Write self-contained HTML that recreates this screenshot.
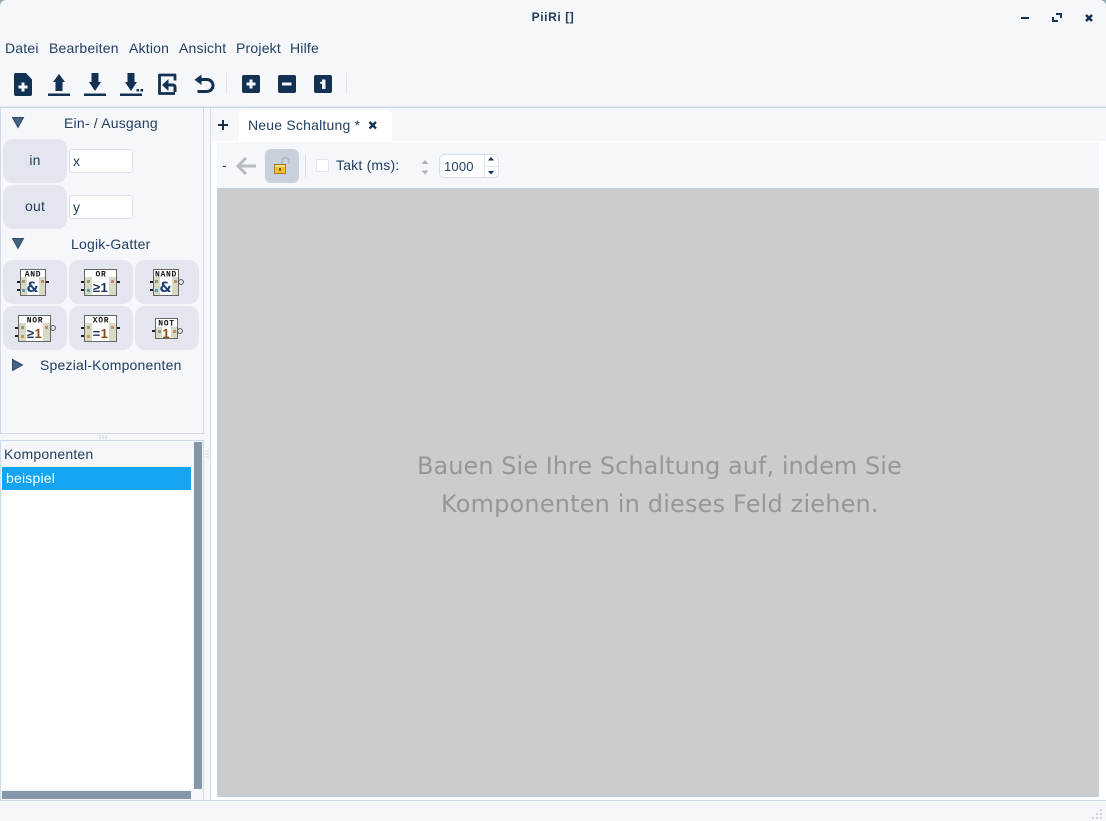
<!DOCTYPE html>
<html><head><meta charset="utf-8"><style>
html,body{margin:0;padding:0;background:#f5f7fb}
body{position:relative;width:1106px;height:821px;overflow:hidden;font-family:"Liberation Sans",sans-serif;font-size:14px;color:#233e61;letter-spacing:.2px}
.a{position:absolute;white-space:nowrap;box-sizing:border-box}
.m{top:41px;line-height:15px}
.b{background:#e3e6ee;border-radius:10px;text-align:center}
.i{background:#fff;border:1px solid #d8e0ee;border-radius:3px;padding-left:3px;font-size:14px;line-height:22px;letter-spacing:0}
</style></head><body>
<div class="a" style="left:0;top:0;width:6px;height:6px;background:#8fa9ad"><div style="width:6px;height:6px;background:#f5f7fb;border-top-left-radius:6px"></div></div>
<div class="a" style="right:0;top:0;width:6px;height:6px;background:#8fa9ad"><div style="width:6px;height:6px;background:#f5f7fb;border-top-right-radius:6px"></div></div>
<div class="a" style="left:0;width:1106px;top:10px;text-align:center;font-weight:bold;font-size:12px;line-height:15px;color:#1f3a5c;letter-spacing:.6px">PiiRi []</div>
<div class="a m" style="left:5px">Datei</div><div class="a m" style="left:49px">Bearbeiten</div><div class="a m" style="left:129px">Aktion</div><div class="a m" style="left:179px">Ansicht</div><div class="a m" style="left:236px">Projekt</div><div class="a m" style="left:290px">Hilfe</div>

<div class="a" style="left:0;top:106px;width:1106px;height:1px;background:#e3e9f3"></div>
<div class="a" style="left:0;top:107px;width:1106px;height:1px;background:#c9d6e8"></div>
<div class="a" style="left:0;top:108px;width:204px;height:326px;border:1px solid #cfd9e8;border-top:0"></div>
<div class="a" style="left:0;top:440px;width:204px;height:361px;border:1px solid #cfd9e8"></div>
<div class="a" style="left:210px;top:108px;width:896px;height:693px;border:1px solid #cfd9e8;border-top:0;border-right:0"></div>
<div class="a" style="left:211px;top:141px;width:895px;height:659px;background:#fff"></div>
<div class="a" style="left:217px;top:142px;width:882px;height:46px;background:#f5f7fb"></div>
<div class="a" style="left:217px;top:188px;width:882px;height:609px;background:#cccccc;border:1px solid #c4d0e0"></div>
<div class="a" style="left:239px;top:110px;width:153px;height:31px;background:#fff;border-radius:6px 6px 0 0"></div>
<div class="a" style="left:248px;top:117px;line-height:16px">Neue Schaltung *</div>
<div class="a" style="left:0;top:800px;width:1090px;height:1px;background:#cfd9e8"></div>

<div class="a" style="left:64px;top:116px;line-height:15px">Ein- / Ausgang</div>
<div class="a" style="left:71px;top:237px;line-height:15px">Logik-Gatter</div>
<div class="a" style="left:40px;top:358px;line-height:15px">Spezial-Komponenten</div>
<div class="a b" style="left:3px;top:139px;width:64px;height:44px;line-height:43px">in</div>
<div class="a b" style="left:3px;top:185px;width:64px;height:44px;line-height:43px">out</div>
<div class="a i" style="left:69px;top:149px;width:64px;height:24px">x</div>
<div class="a i" style="left:69px;top:195px;width:64px;height:24px">y</div>
<div class="a b" style="left:3px;top:260px;width:64px;height:44px"></div>
<div class="a b" style="left:69px;top:260px;width:64px;height:44px"></div>
<div class="a b" style="left:135px;top:260px;width:64px;height:44px"></div>
<div class="a b" style="left:3px;top:306px;width:64px;height:44px"></div>
<div class="a b" style="left:69px;top:306px;width:64px;height:44px"></div>
<div class="a b" style="left:135px;top:306px;width:64px;height:44px"></div>

<div class="a" style="left:2px;top:442px;width:190px;height:349px;background:#fff"></div>
<div class="a" style="left:2px;top:442px;width:190px;height:25px;background:#f5f7fb"></div>
<div class="a" style="left:192px;top:442px;width:10px;height:357px;background:#f5f7fb"></div>
<div class="a" style="left:2px;top:789px;width:200px;height:10px;background:#f5f7fb"></div>
<div class="a" style="left:4px;top:447px;line-height:15px">Komponenten</div>
<div class="a" style="left:2px;top:467px;width:189px;height:23px;background:#14a5f2;color:#fff;padding-left:4px;line-height:23px">beispiel</div>
<div class="a" style="left:194px;top:442px;width:8px;height:347px;background:#8496aa"></div>
<div class="a" style="left:2px;top:791px;width:189px;height:8px;background:#8496aa"></div>

<div class="a" style="left:222px;top:158px;line-height:15px">-</div>
<div class="a" style="left:265px;top:149px;width:34px;height:34px;background:#c9d1dc;border-radius:6px"></div>
<div class="a" style="left:316px;top:159px;width:13px;height:13px;background:#fff;border:1px solid #dfe5ef;border-radius:2px"></div>
<div class="a" style="left:336px;top:158px;line-height:15px">Takt (ms):</div>
<div class="a" style="left:439px;top:154px;width:60px;height:24px;background:#fff;border:1px solid #d5deec;border-radius:5px"></div>
<div class="a" style="left:444px;top:159px;line-height:15px;font-size:13px;letter-spacing:.2px">1000</div>

<div class="a" style="left:417px;top:447px;font-family:'DejaVu Sans',sans-serif;font-size:24px;line-height:38px;color:#979797;letter-spacing:.04px">Bauen Sie Ihre Schaltung auf, indem Sie</div>
<div class="a" style="left:441px;top:485px;font-family:'DejaVu Sans',sans-serif;font-size:24px;line-height:38px;color:#979797;letter-spacing:.17px">Komponenten in dieses Feld ziehen.</div>

<svg class="a" style="left:0;top:0" width="1106" height="821" viewBox="0 0 1106 821">
<g fill="#133253">
<!-- window buttons -->
<rect x="1021" y="17" width="8" height="2"/>
<path d="M1056 13h6v5h-2v-3h-4zM1052 17h2v3h4v2h-6z"/>
<path d="M1086 15l6 6m0-6l-6 6" fill="none" stroke="#133253" stroke-width="2.600"/>
<!-- new file -->
<path fill-rule="evenodd" d="M16 73h10l6 6.500V94a2 2 0 0 1-2 2H16a2 2 0 0 1-2-2V75a2 2 0 0 1 2-2zM21.500 82.500v3H18.500v3h3v3h3v-3h3v-3h-3v-3z"/>
<!-- upload -->
<path d="M59 74l6 8h-2.500v9h-7v-9H53zM48 93.500h22v2.500H48z"/>
<!-- download -->
<path d="M91.500 73h7v9h2.500l-6 9-6-9h2.500zM84 93.500h22v2.500H84z"/>
<!-- save as -->
<path d="M127.500 73h7v9h2.500l-6 9-6-9h2.500zM120 93.500h22v2.500h-22z"/>
<rect x="136.500" y="89" width="2.500" height="2.500"/><rect x="140.500" y="89" width="2.500" height="2.500"/>
<!-- import -->
<path d="M175 80.500V75H159.500V93.500H175" fill="none" stroke="#133253" stroke-width="2.800" stroke-linejoin="round"/>
<path d="M162 85l6.500-6v12z"/>
<path d="M167 85h6a2 2 0 0 1 2 2v5" fill="none" stroke="#133253" stroke-width="3"/>
<!-- undo -->
<path d="M199 79.500h8a6 6 0 0 1 0 12h-9.500" fill="none" stroke="#133253" stroke-width="3"/>
<path d="M201.500 74.500v10.500l-7-5.200z"/>
<!-- square buttons -->
<path fill-rule="evenodd" d="M244 75h14a2 2 0 0 1 2 2v14a2 2 0 0 1-2 2h-14a2 2 0 0 1-2-2V77a2 2 0 0 1 2-2zM249.500 79.500v3H246.500v3h3v3h3v-3h3v-3h-3v-3z"/>
<path fill-rule="evenodd" d="M280 75h14a2 2 0 0 1 2 2v14a2 2 0 0 1-2 2h-14a2 2 0 0 1-2-2V77a2 2 0 0 1 2-2zM282 82.500v3h9.500v-3z"/>
<path fill-rule="evenodd" d="M316 75h14a2 2 0 0 1 2 2v14a2 2 0 0 1-2 2h-14a2 2 0 0 1-2-2V77a2 2 0 0 1 2-2zM322 79.500v2.200h-2v2h2V89h3.500V79.500z"/>
<!-- tab + and x -->
<path d="M222 120h2v4h4v2h-4v4h-2v-4h-4v-2h4z"/>
<path d="M369.500 122l6.500 6.500m0-6.500l-6.500 6.500" fill="none" stroke="#133253" stroke-width="2.400"/>
<path d="M491 157l3 3.500h-6zM491 174.500l3-3.500h-6z"/>
</g>
<rect x="226" y="73" width="1" height="21" fill="#dde4ee"/>
<rect x="346" y="73" width="1" height="21" fill="#dde4ee"/>
<rect x="305" y="155" width="1" height="22" fill="#d5dde9"/>
<rect x="484" y="155" width="1" height="22" fill="#e2e8f1"/>
<rect x="485" y="166" width="13" height="1" fill="#e2e8f1"/>
<path d="M425 160l3.500 4h-7zM425 174.500l3.500-4h-7z" fill="#a9b2be"/>
<!-- triangles -->
<g fill="#48637f" stroke="#2f4c6c" stroke-width="1"><path d="M12.500 117.500h11l-5.500 10z"/><path d="M12.500 238.500h11l-5.500 10z"/><path d="M12.500 359.500l10 5.500-10 5.500z"/></g>
<!-- back arrow -->
<path d="M246 158l-8 8 8 8M238 166h18" fill="none" stroke="#b6bbc2" stroke-width="3"/>
<!-- lock -->
<path d="M282 164v-3a3.500 3.500 0 0 1 7 0v2.500" fill="none" stroke="#b4b4ae" stroke-width="1.400"/>
<rect x="274.500" y="164.500" width="11" height="9" fill="#f0c030" stroke="#a87b12"/>
<rect x="275" y="165" width="10" height="2" fill="#f8e08a"/>
<rect x="279" y="168" width="2" height="3" fill="#7a5a10"/>
<!-- splitter handles -->
<path d="M100 435v4M103 435v4M106 435v4" stroke="#c9d4e3"/>
<path d="M205 451h4M205 454h4M205 457h4" stroke="#d5dde9"/>
<g fill="#ccd3de"><rect x="1100" y="809" width="2" height="2"/><rect x="1100" y="813" width="2" height="2"/><rect x="1096" y="813" width="2" height="2"/><rect x="1100" y="817" width="2" height="2"/><rect x="1096" y="817" width="2" height="2"/><rect x="1092" y="817" width="2" height="2"/></g>

<g font-family="'Liberation Mono',monospace" text-anchor="middle" letter-spacing=".7">
<!-- AND -->
<g transform="translate(20 269)">
<rect x=".5" y=".5" width="25" height="26" fill="#fff" stroke="#666"/>
<rect x="1" y="8" width="6" height="18" fill="#d6d9c4"/><rect x="19" y="8" width="6" height="18" fill="#d6d9c4"/>
<rect x="-3" y="12" width="3" height="2" fill="#222"/><rect x="-3" y="20" width="3" height="2" fill="#222"/><rect x="26" y="12" width="3" height="2" fill="#222"/>
<text x="13" y="7.500" font-size="8" font-weight="bold" fill="#111">AND</text>
<text x="12.500" y="23" font-size="14" font-weight="bold" fill="#1c3f72" letter-spacing="0" font-family="'DejaVu Sans',sans-serif">&amp;</text>
<rect x="2" y="11" width="3" height="3" fill="#9a9a70"/><rect x="2" y="20" width="3" height="3" fill="#5a9ac0"/><rect x="21" y="11" width="3" height="3" fill="#c08a70"/>
</g>
<!-- OR -->
<g transform="translate(84 269)">
<rect x=".5" y=".5" width="32" height="26" fill="#fff" stroke="#666"/>
<rect x="1" y="8" width="7" height="18" fill="#d6d9c4"/><rect x="25" y="8" width="7" height="18" fill="#d6d9c4"/>
<rect x="-3" y="12" width="3" height="2" fill="#222"/><rect x="-3" y="20" width="3" height="2" fill="#222"/><rect x="33" y="12" width="3" height="2" fill="#222"/>
<text x="17" y="7.500" font-size="8" font-weight="bold" fill="#111">OR</text>
<text x="16.500" y="23" font-size="13" font-weight="bold" fill="#1a2f55" letter-spacing=".5" font-family="'Liberation Sans',sans-serif">≥1</text>
<rect x="3" y="11" width="3" height="3" fill="#9a9a70"/><rect x="3" y="20" width="3" height="3" fill="#5a9ac0"/><rect x="27" y="11" width="3" height="3" fill="#c08a70"/>
</g>
<!-- NAND -->
<g transform="translate(153 269)">
<rect x=".5" y=".5" width="25" height="26" fill="#fff" stroke="#666"/>
<rect x="1" y="8" width="6" height="18" fill="#d6d9c4"/><rect x="19" y="8" width="6" height="18" fill="#d6d9c4"/>
<rect x="-3" y="12" width="3" height="2" fill="#222"/><rect x="-3" y="20" width="3" height="2" fill="#222"/>
<circle cx="28" cy="13" r="2.400" fill="none" stroke="#444" stroke-width=".9"/>
<text x="13" y="7.500" font-size="8" font-weight="bold" fill="#111">NAND</text>
<text x="12.500" y="23" font-size="14" font-weight="bold" fill="#1c3f72" letter-spacing="0" font-family="'DejaVu Sans',sans-serif">&amp;</text>
<rect x="2" y="11" width="3" height="3" fill="#9a9a70"/><rect x="2" y="20" width="3" height="3" fill="#5a9ac0"/><rect x="21" y="11" width="3" height="3" fill="#c08a70"/>
</g>
<!-- NOR -->
<g transform="translate(18 315)">
<rect x=".5" y=".5" width="32" height="26" fill="#fff" stroke="#666"/>
<rect x="1" y="8" width="7" height="18" fill="#d6d9c4"/><rect x="25" y="8" width="7" height="18" fill="#d6d9c4"/>
<rect x="-3" y="12" width="3" height="2" fill="#222"/><rect x="-3" y="20" width="3" height="2" fill="#222"/>
<circle cx="35" cy="13" r="2.400" fill="none" stroke="#444" stroke-width=".9"/>
<text x="17" y="7.500" font-size="8" font-weight="bold" fill="#111">NOR</text>
<text x="16.500" y="23" font-size="13" font-weight="bold" fill="#1a2f55" letter-spacing=".5" font-family="'Liberation Sans',sans-serif">≥<tspan fill="#8a4a14">1</tspan></text>
<rect x="3" y="11" width="3" height="3" fill="#9a9a70"/><rect x="3" y="20" width="3" height="3" fill="#c89a50"/><rect x="27" y="11" width="3" height="3" fill="#c08a70"/>
</g>
<!-- XOR -->
<g transform="translate(84 315)">
<rect x=".5" y=".5" width="32" height="26" fill="#fff" stroke="#666"/>
<rect x="1" y="8" width="7" height="18" fill="#d6d9c4"/><rect x="25" y="8" width="7" height="18" fill="#d6d9c4"/>
<rect x="-3" y="12" width="3" height="2" fill="#222"/><rect x="-3" y="20" width="3" height="2" fill="#222"/><rect x="33" y="12" width="3" height="2" fill="#222"/>
<text x="17" y="7.500" font-size="8" font-weight="bold" fill="#111">XOR</text>
<text x="16.500" y="23" font-size="13" font-weight="bold" fill="#1a2f55" letter-spacing=".5" font-family="'Liberation Sans',sans-serif">=<tspan fill="#8a4a14">1</tspan></text>
<rect x="3" y="11" width="3" height="3" fill="#9a9a70"/><rect x="3" y="20" width="3" height="3" fill="#c89a50"/><rect x="27" y="11" width="3" height="3" fill="#c08a70"/>
</g>
<!-- NOT -->
<g transform="translate(155 318)">
<rect x=".5" y=".5" width="22" height="20" fill="#fff" stroke="#666"/>
<rect x="1" y="9" width="6" height="11" fill="#d6d9c4"/><rect x="16" y="9" width="6" height="11" fill="#d6d9c4"/>
<rect x="-3" y="12" width="3" height="2" fill="#222"/>
<circle cx="25" cy="13" r="2.400" fill="none" stroke="#444" stroke-width=".9"/>
<text x="11.500" y="7.500" font-size="8" font-weight="bold" fill="#111">NOT</text>
<text x="11" y="20" font-size="13" font-weight="bold" fill="#8a4a14" letter-spacing="0" font-family="'Liberation Sans',sans-serif">1</text>
<rect x="3" y="12" width="3" height="3" fill="#9a9a70"/><rect x="18" y="12" width="3" height="3" fill="#c08a70"/>
</g>
</g>
</svg>
</body></html>
